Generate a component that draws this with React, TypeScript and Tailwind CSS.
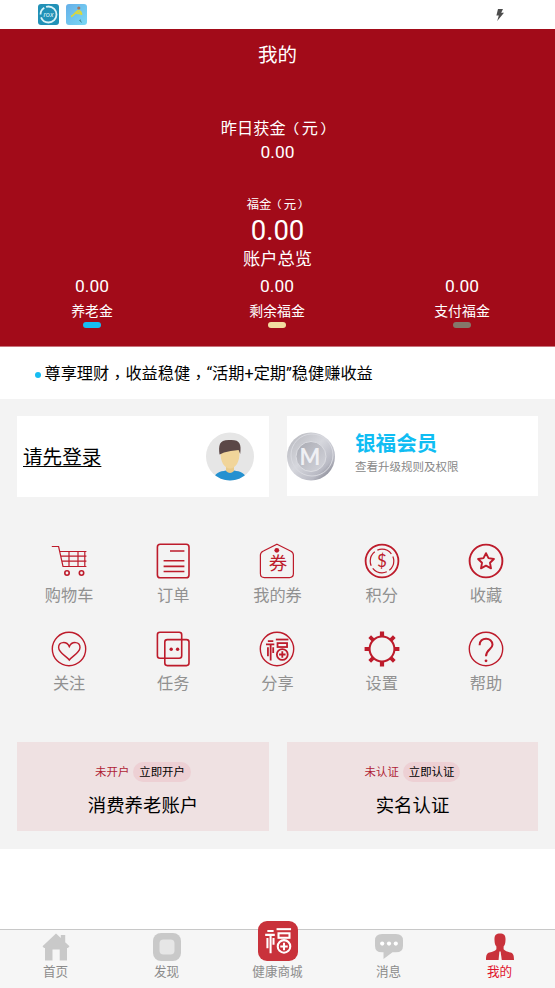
import type { ReactNode } from "react"
import clsx from "clsx"

/* Geometric brand mark, shared by the share icon and the mall tab */
function BrandMark() {
    return (
        <g fill="none" stroke="currentColor" strokeWidth="2.1">
            <path d="M3 3.6H9.4M0.8 7.6H10.6M6.3 7.6V26.4M3.1 10.8V21.4M9.3 10.8V17.6" />
            <path d="M12.4 1.8H27.2" />
            <rect x="14.4" y="6" width="11.2" height="4.6" />
            <circle cx="20" cy="19.4" r="6.4" />
            <path d="M20 15.6V23.2M16.2 19.4H23.8" />
        </g>
    )
}

function LineIcon({ children, width = 1.2 }: { children: ReactNode; width?: number }) {
    return (
        <svg className="w-9 h-9 text-[#bd1b2b]" viewBox="0 0 36 36" fill="none" stroke="currentColor" strokeWidth={width}>
            {children}
        </svg>
    )
}

const menu = [
    {
        label: "购物车",
        icon: (
            <LineIcon>
                <path d="M.8 3.5H7.6L12 23.5H35.4M9 8.5H35.4M10 13.2H35.4M11 18.2H35.4M18 8.5V23.5M27 8.5V23.5M33.8 8.5V23.5" />
                <circle cx="16" cy="30" r="2.2" strokeWidth="1.6" />
                <circle cx="30.5" cy="30" r="2.2" strokeWidth="1.6" />
            </LineIcon>
        )
    },
    {
        label: "订单",
        icon: (
            <LineIcon width={1.6}>
                <rect x="2.4" y="1.3" width="31.6" height="33.4" rx="2.8" />
                <path d="M15 8H29.4M8.6 17.8H29.4M8.6 23.4H29.4M8.6 28.5H29.4" />
            </LineIcon>
        )
    },
    {
        label: "我的券",
        icon: (
            <LineIcon>
                <path d="M18 1.2L31.5 8Q34.4 9.4 34.4 12V30.6Q34.4 34.6 30.4 34.6H5.4Q1.4 34.6 1.4 30.6V12Q1.4 9.4 4.4 8Z" />
                <circle cx="17.8" cy="7.3" r="2.4" fill="currentColor" stroke="none" />
                <text x="19" y="27" textAnchor="middle" fontSize="18.5" fill="currentColor" stroke="none">券</text>
            </LineIcon>
        )
    },
    {
        label: "积分",
        icon: (
            <LineIcon>
                <circle cx="18" cy="18" r="16.4" strokeWidth="1.8" />
                <circle cx="18" cy="18" r="11.8" strokeDasharray="15.5 3" strokeDashoffset="5" />
                <text x="18" y="24" textAnchor="middle" fontSize="17" fill="currentColor" stroke="none" fontFamily="Lato, sans-serif">$</text>
            </LineIcon>
        )
    },
    {
        label: "收藏",
        icon: (
            <LineIcon width={1.9}>
                <circle cx="18" cy="18" r="16.4" />
                <path d="M18 10.2L20.5 15.1L25.9 16L22 19.8L23 25.3L18 22.7L13 25.3L14 19.8L10.1 16L15.5 15.1Z" strokeLinejoin="round" />
            </LineIcon>
        )
    },
    {
        label: "关注",
        icon: (
            <LineIcon width={1.4}>
                <circle cx="18" cy="18" r="16.7" />
                <path d="M18.3 29C16 25.5 7.6 21.8 7.6 16.4C7.6 10.4 15.8 9.8 18.3 15.6C20.8 9.8 29 10.4 29 16.4C29 21.8 20.6 25.5 18.3 29Z" />
            </LineIcon>
        )
    },
    {
        label: "任务",
        icon: (
            <LineIcon width={1.6}>
                <rect x="2.4" y="1.3" width="24.3" height="26" rx="2.5" />
                <rect x="9.8" y="8.6" width="24.2" height="26" rx="2.5" />
                <circle cx="16.2" cy="18.3" r="1.7" fill="currentColor" stroke="none" />
                <circle cx="22.6" cy="18.3" r="1.7" fill="currentColor" stroke="none" />
            </LineIcon>
        )
    },
    {
        label: "分享",
        icon: (
            <LineIcon width={1.4}>
                <circle cx="18" cy="18" r="16.7" />
                <g transform="translate(6.3 7) scale(.85)">
                    <BrandMark />
                </g>
            </LineIcon>
        )
    },
    {
        label: "设置",
        icon: (
            <LineIcon width={2}>
                <circle cx="18" cy="18" r="12.4" />
                <path d="M18 .6V6M18 30V35.4M.6 18H6M30 18H35.4" strokeWidth="4.2" />
                <path d="M5.7 5.7L9.2 9.2M26.8 26.8L30.3 30.3M5.7 30.3L9.2 26.8M26.8 9.2L30.3 5.7" strokeWidth="3.8" />
            </LineIcon>
        )
    },
    {
        label: "帮助",
        icon: (
            <LineIcon width={1.4}>
                <circle cx="18" cy="18" r="16.7" />
                <path d="M11.6 14.2C11.4 5.6 24.6 5.6 24.5 13.8C24.4 18.3 18 18.5 18 25.2" strokeWidth="2" />
                <circle cx="18" cy="29.8" r="1.4" fill="currentColor" stroke="none" />
            </LineIcon>
        )
    }
]

const accounts = [
    { label: "养老金", value: "0.00", color: "bg-[#16bdf2]" },
    { label: "剩余福金", value: "0.00", color: "bg-[#f3dda0]" },
    { label: "支付福金", value: "0.00", color: "bg-[#84786a]" }
]

const tabs = [
    {
        label: "首页",
        icon: (
            <svg className="w-7 h-7" viewBox="0 0 28 28" fill="currentColor">
                <path d="M14 0.5L18.8 5V2H23.2V9.2L27.5 13.2L26 15H25V27.5H17.7V16.5H10.5V27.5H3V15H2L0.5 13.2Z" />
            </svg>
        )
    },
    {
        label: "发现",
        icon: (
            <svg className="w-7 h-7" viewBox="0 0 28 28" fill="currentColor">
                <rect width="28" height="28" rx="8" />
                <rect x="6.5" y="6.5" width="15" height="15" rx="4" fill="#e6e6e6" />
            </svg>
        )
    },
    {
        label: "健康商城",
        icon: (
            <svg className="shrink-0 w-10 h-10 text-white" viewBox="0 0 40 40">
                <rect width="40" height="40" rx="9" fill="#c9323b" />
                <g transform="translate(6.4 6.4) scale(.98)">
                    <BrandMark />
                </g>
            </svg>
        )
    },
    {
        label: "消息",
        icon: (
            <svg className="w-7 h-7" viewBox="0 0 28 28" fill="currentColor">
                <path d="M7 1H21Q28 1 28 7.5V13Q28 19.3 21 19.3H17.5L8.5 26V19.3H7Q0 19.3 0 13V7.5Q0 1 7 1Z" />
                <circle cx="7.2" cy="10.6" r="2.1" fill="#fff" />
                <circle cx="14" cy="10.6" r="2.1" fill="#fff" />
                <circle cx="20.8" cy="10.6" r="2.1" fill="#fff" />
            </svg>
        )
    },
    {
        label: "我的",
        active: true,
        icon: (
            <svg className="w-7 h-7" viewBox="0 0 28 28" fill="#c9323b">
                <path d="M14 .6C18 .6 19.8 2.6 19.5 7C19.5 10.5 18.6 12.4 17.6 13.6V16.2C19 18 21.5 18.6 24.5 19.6C27.2 20.4 28 22 28 27H0C0 22 .8 20.4 3.5 19.6C6.5 18.6 9 18 10.4 16.2V13.6C9.4 12.4 8.5 10.5 8.5 7C8.2 2.6 10 .6 14 .6Z" />
                <path d="M13.4 18.6H14.6L15.8 27H12.6Z" fill="#f6f6f6" />
            </svg>
        )
    }
]

function StatusBar() {
    return (
        <div className="h-[29px] flex items-center pl-[38px] pr-[51px] bg-white">
            <svg className="w-[21px] h-[21px]" viewBox="0 0 21 21">
                <rect width="21" height="21" rx="3" fill="#2191b7" />
                <circle cx="10.5" cy="10.5" r="8" fill="none" stroke="#d9f2f7" strokeWidth="1.8" strokeDasharray="22 3 8 2" />
                <text x="10.5" y="13" textAnchor="middle" fontSize="7.5" fontStyle="italic" fill="#d9f2f7">rox</text>
            </svg>
            <svg className="ml-[7px] w-[21px] h-[21px]" viewBox="0 0 21 21">
                <defs>
                    <linearGradient id="sky" x1="0" y1="0" x2="1" y2="1">
                        <stop stopColor="#65afe8" />
                        <stop offset="1" stopColor="#79d9f5" />
                    </linearGradient>
                </defs>
                <rect width="21" height="21" rx="3" fill="url(#sky)" />
                <path d="M5 12.5C8 12 9 7.5 12.5 6.5C14.5 7 15.5 8 15.5 11M10 9L15 9.5" fill="none" stroke="#d9d83e" strokeWidth="1.8" />
                <circle cx="12.8" cy="4" r="1.6" fill="#a4775f" />
                <path d="M13 16L16 18.5M14.5 15.5V18" stroke="#4b9aaa" />
            </svg>
            <svg className="ml-auto w-2 h-3" viewBox="0 0 8 12" fill="#4d4d4d">
                <path d="M2 0H7L5.2 3.8H8L1.2 12L2.8 6.4H.4Z" />
            </svg>
        </div>
    )
}

/* Full-width comma, centred in its cell */
function Comma() {
    return <span className="inline-block translate-y-[0.27em] font-['Noto_Sans_CJK_TC']" lang="zh-TW">，</span>
}

/* Full-width parentheses, pulled away from the text inside */
function Unit({ children }: { children: string }) {
    return (
        <>
            <span className="inline-block scale-y-85 -translate-x-[0.14em]">（</span>
            {children}
            <span className="inline-block scale-y-85 translate-x-[0.14em]">）</span>
        </>
    )
}

function Summary() {
    return (
        <section className="h-[318px] flex flex-col items-center bg-[#a20b19] border-b border-[#c8747c] text-white">
            <h1 className="h-[50px] pt-0.5 leading-[50px] text-[19.5px]">我的</h1>
            <div className="mt-[37px] h-6 leading-[25px] text-[16.2px]">
                昨日获金<Unit>元</Unit>
            </div>
            <div className="h-[25px] leading-[25px] text-[17.4px]">0.00</div>
            <div className="mt-[30px] h-5 leading-[21px] text-[12.3px]">
                福金<Unit>元</Unit>
            </div>
            <div className="h-[30px] leading-8 text-[27.5px]">0.00</div>
            <div className="h-[26px] leading-[28px] text-[17.3px]">账户总览</div>
            <div className="mt-[3px] self-stretch grid grid-cols-3">
                {accounts.map((item) => (
                    <div key={item.label} className="pr-px flex flex-col items-center">
                        <div className="h-6 leading-6 text-[17.4px]">{item.value}</div>
                        <div className="h-6 leading-[26px] text-[13.9px]">{item.label}</div>
                        <div className={clsx("w-[18px] h-1.5 rounded-[3px]", item.color)} />
                    </div>
                ))}
            </div>
        </section>
    )
}

function Avatar() {
    return (
        <svg className="w-12 h-[49px]" viewBox="0 0 48 49">
            <clipPath id="face">
                <circle cx="24" cy="24.5" r="24" />
            </clipPath>
            <g clipPath="url(#face)">
                <rect width="48" height="49" fill="#e6e6e6" />
                <path d="M7 49C8 40.5 14 39.5 20 38.5H28C34 39.5 40 40.5 41 49Z" fill="#2491d0" />
                <path d="M20 33H28V39Q24 43 20 39Z" fill="#e9cb8b" />
                <path d="M14.5 19C14 30 18.5 36.5 24 36.5S34 30 33.5 19Q28 13 14.5 19Z" fill="#f1d59a" />
                <path d="M13.5 22.5C12.5 13 13 7.5 24 8C34 7.5 35.5 12 34.2 22L32.6 18Q24 18.5 18 20.5L14.8 22Z" fill="#5b4746" />
            </g>
        </svg>
    )
}

function Coin() {
    return (
        <svg className="w-12 h-[49px]" viewBox="0 0 48 49">
            <defs>
                <linearGradient id="silver" x1="0" y1="0" x2="1" y2="1">
                    <stop stopColor="#b5b6bc" />
                    <stop offset=".45" stopColor="#d6d7dd" />
                    <stop offset=".75" stopColor="#b9bac4" />
                    <stop offset="1" stopColor="#666773" />
                </linearGradient>
                <linearGradient id="inner" x1="0" y1="0" x2="1" y2="1">
                    <stop stopColor="#a9aab2" />
                    <stop offset="1" stopColor="#d5d6dd" />
                </linearGradient>
            </defs>
            <circle cx="24" cy="24.5" r="24" fill="url(#silver)" />
            <circle cx="25" cy="23" r="21" fill="none" stroke="#d9dae0" />
            <circle cx="24" cy="24.5" r="15" fill="url(#inner)" stroke="#dcdde2" />
            <text x="23" y="33" textAnchor="middle" fontSize="22" fontWeight="700" fill="#f0f0f4" fontFamily="Lato, sans-serif">M</text>
        </svg>
    )
}

function OpenCard({ status, action, title }: { status: string; action: string; title: string }) {
    return (
        <div className="h-[89px] pt-5 flex flex-col items-center bg-[#efe1e2]">
            <div className="h-5 flex items-center gap-1 text-[11.4px]">
                <span className="h-5 leading-5 text-[#b01f36]">{status}</span>
                <span className="h-5 px-1.5 leading-5 rounded-full bg-[#edd0d4] text-black">{action}</span>
            </div>
            <div className="mt-[11px] h-6 leading-[26px] text-[18.4px]">{title}</div>
        </div>
    )
}

export default function App() {
    return (
        <div className="w-[555px] h-[988px] flex flex-col overflow-hidden bg-white font-[Roboto,'Noto_Sans_CJK_SC',sans-serif] text-black">
            <StatusBar />
            <Summary />

            {/* Notice */}
            <div className="h-[52px] pl-[34.5px] flex items-center">
                <span className="mt-1 mr-1 w-1.5 h-1.5 rounded-full bg-[#16bdf2]" />
                <span className="leading-6 pb-px text-[16.2px] whitespace-nowrap">
                    尊享理财<Comma />收益稳健<Comma />“活期+定期”稳健赚收益
                </span>
            </div>

            <main className="h-[450px] px-[17px] pt-[17px] bg-[#f3f3f3]">
                <div className="grid grid-cols-[252px_251px] gap-[18px] items-start">
                    <div className="h-[81px] pl-1.5 pr-[15px] flex items-center justify-between bg-white">
                        <a className="pt-0.5 text-[19.6px] underline decoration-1 underline-offset-2">请先登录</a>
                        <Avatar />
                    </div>
                    <div className="h-20 flex items-center bg-white">
                        <Coin />
                        <div className="ml-5 pb-1">
                            <div className="h-[26px] leading-[26px] text-[20.6px] font-bold text-[#10bdf3]">银福会员</div>
                            <div className="h-5 leading-5 text-[11.5px] text-[#888]">查看升级规则及权限</div>
                        </div>
                    </div>
                </div>

                <div className="mt-[46px] grid grid-cols-5 gap-y-[17px]">
                    {menu.map((item) => (
                        <div key={item.label} className="h-[71px] flex flex-col items-center">
                            {item.icon}
                            <span className="mt-[5px] leading-6 text-[16.2px] text-[#919191]">{item.label}</span>
                        </div>
                    ))}
                </div>

                <div className="mt-10 grid grid-cols-[252px_251px] gap-[18px]">
                    <OpenCard status="未开户" action="立即开户" title="消费养老账户" />
                    <OpenCard status="未认证" action="立即认证" title="实名认证" />
                </div>
            </main>

            {/* Tab bar */}
            <nav className="mt-auto h-[59px] grid grid-cols-5 bg-[#f6f6f6] border-t border-[#c8c8c8]">
                {tabs.map((tab) => (
                    <div key={tab.label} className="h-[51px] flex flex-col items-center justify-end text-[#c9c9c9]">
                        {tab.icon}
                        <span className={clsx("shrink-0 h-5 leading-[22px] text-[12.6px]", tab.active ? "text-[#e0142d]" : "text-[#8c8c8c]")}>
                            {tab.label}
                        </span>
                    </div>
                ))}
            </nav>
        </div>
    )
}
